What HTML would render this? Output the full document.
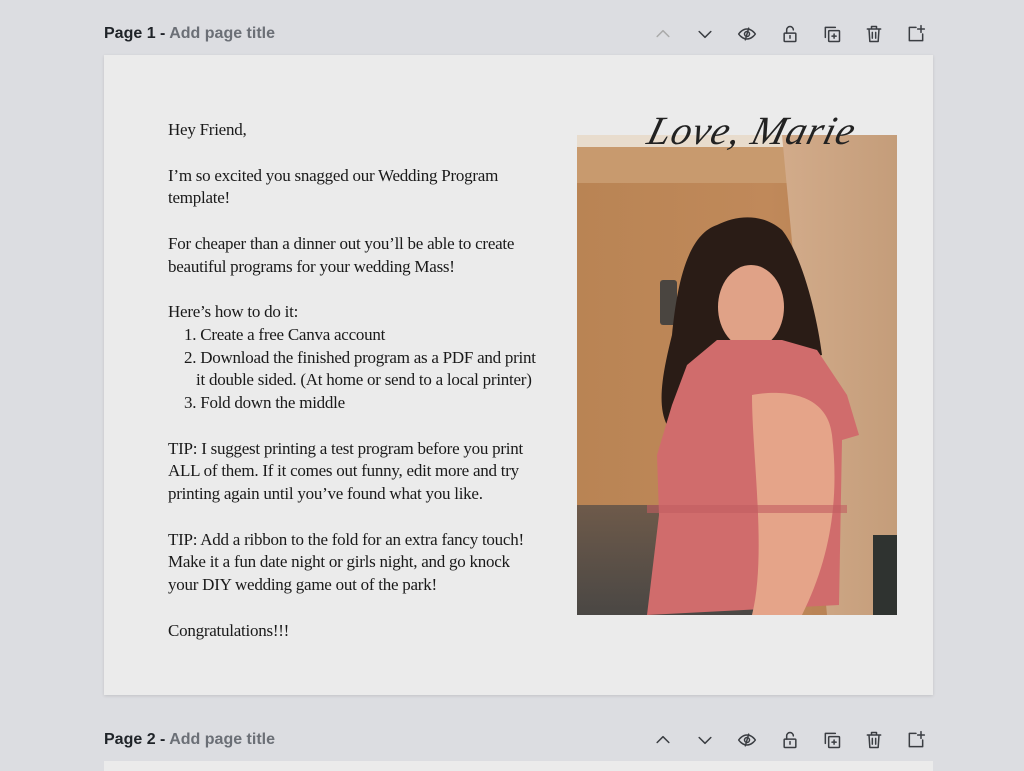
<!DOCTYPE html>
<html><head><meta charset="utf-8"><style>
*{margin:0;padding:0;box-sizing:border-box}
body{width:1024px;height:767px;background:#dcdde1;position:relative;overflow:hidden;font-family:"Liberation Sans",sans-serif}
.hdr{position:absolute;left:104px;font-size:16px;color:#1f2328;font-weight:bold}
.hdr span{color:#6b6f76}
.icons{position:absolute;left:650px;width:290px;height:24px}
.icons svg{position:absolute;top:0}
.page{position:absolute;left:104px;top:55px;width:829px;height:640px;background:#ebebeb;box-shadow:0 1px 3px rgba(0,0,0,.12)}
.txt{position:absolute;left:64px;top:64px;font-family:"Liberation Serif",serif;font-size:17px;line-height:22.75px;color:#1a1a1a;letter-spacing:-0.25px;white-space:nowrap}
.li{padding-left:16px}
.li2{padding-left:28px}
.photo{position:absolute;left:473px;top:80px;width:320px;height:480px}
.sig{position:absolute;left:545px;top:52px;font-family:"Liberation Serif",serif;font-style:italic;font-size:40px;color:#222;letter-spacing:1px;transform:skewX(-15deg);font-weight:normal}
.p2{position:absolute;left:104px;top:761px;width:829px;height:10px;background:#ebebeb}
</style></head><body>
<div class="hdr" style="top:25px">Page 1 - <span>Add page title</span></div>
<div class="hdr" style="top:731px">Page 2 - <span>Add page title</span></div>
<div class="icons" style="top:24px" id="i1"></div>
<div class="icons" style="top:730px" id="i2"></div>
<div class="page">
<div class="txt">
Hey Friend,<br><br>
I’m so excited you snagged our Wedding Program<br>template!<br><br>
For cheaper than a dinner out you’ll be able to create<br>beautiful programs for your wedding Mass!<br><br>
Here’s how to do it:<br>
<div class="li">1. Create a free Canva account</div>
<div class="li">2. Download the finished program as a PDF and print</div>
<div class="li2">it double sided. (At home or send to a local printer)</div>
<div class="li">3. Fold down the middle</div><br>
TIP: I suggest printing a test program before you print<br>ALL of them. If it comes out funny, edit more and try<br>printing again until you’ve found what you like.<br><br>
TIP: Add a ribbon to the fold for an extra fancy touch!<br>Make it a fun date night or girls night, and go knock<br>your DIY wedding game out of the park!<br><br>
Congratulations!!!
</div>
<svg class="photo" viewBox="0 0 320 480">
<defs>
<linearGradient id="w" x1="0" x2="1"><stop offset="0" stop-color="#b98454"/><stop offset=".6" stop-color="#c0895a"/><stop offset="1" stop-color="#b07c50"/></linearGradient>
<linearGradient id="r" x1="0" x2="1"><stop offset="0" stop-color="#d2ab8a"/><stop offset="1" stop-color="#c49d7a"/></linearGradient>
<linearGradient id="f" x1="0" y1="0" x2="0" y2="1"><stop offset="0" stop-color="#6e5a4a"/><stop offset="1" stop-color="#4a4744"/></linearGradient>
</defs>
<rect width="320" height="480" fill="url(#w)"/>
<rect y="0" width="215" height="48" fill="#c89a6e"/>
<rect y="0" width="215" height="12" fill="#e8dccd"/>
<rect y="370" width="220" height="110" fill="url(#f)"/>
<path d="M205 0 H320 V480 H250 Z" fill="url(#r)"/>
<rect x="296" y="400" width="24" height="80" fill="#2f3330"/>
<rect x="83" y="145" width="17" height="45" rx="3" fill="#4a4540"/>
<path d="M140 90 C110 100 100 150 95 200 C85 240 80 270 90 290 C100 300 110 300 120 290 L140 250 L200 230 L245 220 C240 180 225 120 205 95 C185 78 160 80 140 90Z" fill="#2a1c16"/>
<ellipse cx="174" cy="172" rx="33" ry="42" fill="#e0a287"/>
<path d="M140 205 L205 205 L240 215 L270 260 L282 300 L265 305 L262 470 L70 480 L82 380 L80 320 L95 270 L110 230Z" fill="#d06c6c"/>
<path d="M175 260 C200 255 250 255 255 300 C262 360 255 420 225 480 H175 C190 420 175 320 175 260Z" fill="#e5a489"/>
<rect x="70" y="370" width="200" height="8" fill="#c25e60" opacity=".6"/>
</svg>
<div class="sig">Love, Marie</div>
</div>
<div class="p2"></div>
<script>
var ic='<svg width="20" height="20" viewBox="0 0 24 24" fill="none" stroke="#3a3d42" stroke-width="1.8" stroke-linecap="round" stroke-linejoin="round">';
var s=[
'<path d="M5 15l7-7 7 7" stroke="#aaa"/>',
'<path d="M5 9l7 7 7-7"/>',
'<path d="M2 12s4-6 10-6 10 6 10 6-4 6-10 6S2 12 2 12z"/><circle cx="12" cy="12" r="3"/><path d="M14 5L10 19"/>',
'<rect x="5" y="11" width="14" height="10" rx="1"/><path d="M8 11V7a4 4 0 0 1 8 0"/><path d="M12 14v3"/>',
'<rect x="8" y="8" width="13" height="13" rx="1"/><path d="M4 16V4h12"/><path d="M14.5 12v5M12 14.5h5"/>',
'<path d="M4 6h16M9 6V3h6v3M6 6l1 15h10l1-15M10 10v7M14 10v7"/>',
'<path d="M12 4H4v16h16v-8M18 2v8M14 6h8"/>'];
var xs=[3,45,87,130,172,214,256],h='';
for(var i=0;i<7;i++)h+=ic.replace('<svg','<svg style="left:'+xs[i]+'px"')+s[i]+'</svg>';
document.getElementById('i1').innerHTML=h;
document.getElementById('i2').innerHTML=h.replace('stroke="#aaa"','');
</script>
</body></html>
